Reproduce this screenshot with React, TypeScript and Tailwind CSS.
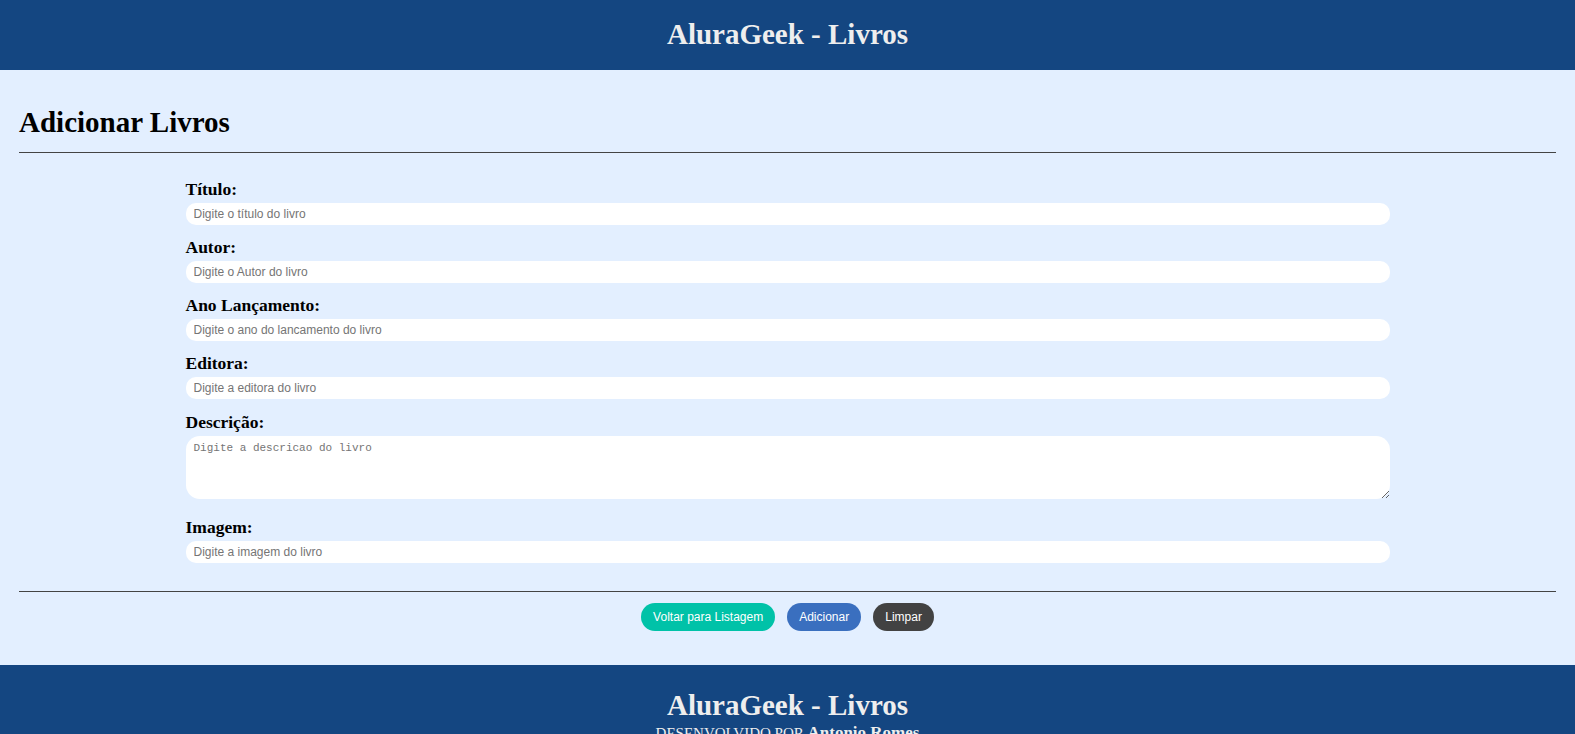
const serif = "font-['Liberation_Serif',serif]";

const FIELDS = [
  { label: "Título:", placeholder: "Digite o título do livro" },
  { label: "Autor:", placeholder: "Digite o Autor do livro" },
  { label: "Ano Lançamento:", placeholder: "Digite o ano do lancamento do livro" },
  { label: "Editora:", placeholder: "Digite a editora do livro" },
];

function Field({ label, placeholder }: { label: string; placeholder: string }) {
  return (
    <div className="flex flex-col">
      <label className={`${serif} text-[17.5px] font-bold leading-[18px] text-black mb-[5px]`}>{label}</label>
      <input
        placeholder={placeholder}
        className="h-[22px] rounded-[10px] bg-white px-2 text-[12px] font-['Liberation_Sans',sans-serif] placeholder:text-[#757575] outline-none"
      />
    </div>
  );
}

export default function App() {
  return (
    <div className="min-h-screen bg-[#e3efff]">
      <header className="h-[70px] bg-[#144681] flex items-center justify-center">
        <h1 className={`${serif} text-[29px] font-bold text-[#eeeeee]`}>AluraGeek - Livros</h1>
      </header>

      <main className="px-[19px] pt-[36px] pb-[34px]">
        <h2 className={`${serif} text-[29px] font-bold leading-8 text-black`}>Adicionar Livros</h2>
        <hr className="mt-[14px] border-t border-[#444]" />

        <form className="w-[1204px] mx-auto pt-[27px] flex flex-col gap-[13px]">
          {FIELDS.map((f) => (
            <Field key={f.label} {...f} />
          ))}
          <div className="flex flex-col mt-[1px]">
            <label className={`${serif} text-[17.5px] font-bold leading-[18px] text-black mb-[5px]`}>Descrição:</label>
            <textarea
              placeholder="Digite a descricao do livro"
              className="h-[63px] rounded-[14px] bg-white px-2 py-[4px] text-[11px] font-['Liberation_Mono',monospace] placeholder:text-[#757575] outline-none"
            />
          </div>
          <div className="mt-[6px]">
            <Field label="Imagem:" placeholder="Digite a imagem do livro" />
          </div>
        </form>

        <hr className="mt-[28px] border-t border-[#444]" />
        <div className="flex justify-center gap-3 pt-[11px] font-['Liberation_Sans',sans-serif] text-[12px] text-white">
          <button className="h-[28px] px-3 rounded-[14px] bg-[#00c2a8]">Voltar para Listagem</button>
          <button className="h-[28px] px-3 rounded-[14px] bg-[#3a6fbf]">Adicionar</button>
          <button className="h-[28px] px-3 rounded-[14px] bg-[#424242]">Limpar</button>
        </div>
      </main>

      <footer className="bg-[#144681] text-[#eeeeee] text-center pt-[24px] pb-4">
        <h1 className={`${serif} text-[29px] font-bold leading-8`}>AluraGeek - Livros</h1>
        <p className={`${serif} text-[15px] leading-5 mt-[2px]`}>
          DESENVOLVIDO POR <span className="text-[17px] font-bold">Antonio Romes</span>
        </p>
      </footer>
    </div>
  );
}
